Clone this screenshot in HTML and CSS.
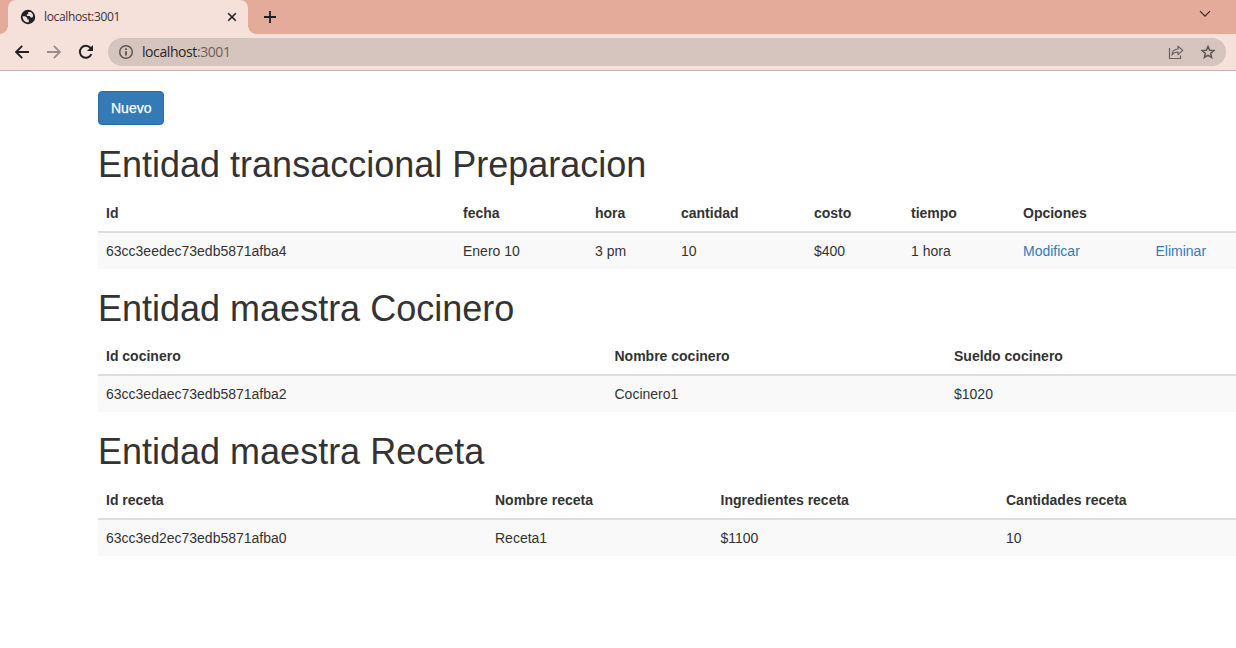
FILE: index.html
```html
<!DOCTYPE html>
<html lang="es">
<head>
<meta charset="utf-8">
<title>localhost:3001</title>
<link rel="stylesheet" href="styles.css">
</head>
<body>
<header class="browser">
  <div class="tabstrip">
    <div class="tab">
      <svg class="globe" width="16" height="16" viewBox="0 0 16 16"><circle cx="8" cy="8" r="7.2" fill="#202124"/><path d="M2.6 7.2h2.6l2.1 1.7v1.5h1.5v2.9c-3.4.3-6.2-2-6.2-6.1zM8.2 3.1h2.5c1.2.8 2.2 2 2.4 3.6l-.6 1.7h-1.8l-.9-1.3H6.9V5.2h1.3z" fill="#f5e0da"/></svg>
      <span class="tab-title">localhost:3001</span>
      <svg class="close" width="10" height="10" viewBox="0 0 10 10"><path d="M1.2 1.2l7.6 7.6M8.8 1.2l-7.6 7.6" stroke="#202124" stroke-width="1.6"/></svg>
    </div>
    <svg class="plus" width="12" height="12" viewBox="0 0 12 12"><path d="M6 0v12M0 6h12" stroke="#202124" stroke-width="1.8"/></svg>
    <svg class="chevron" width="12" height="8" viewBox="0 0 12 8"><path d="M1 1.2l5 5 5-5" fill="none" stroke="#3a2724" stroke-width="1.2"/></svg>
  </div>
  <div class="toolbar">
    <svg width="16" height="16" viewBox="0 0 16 16"><path d="M15 8H2.200M8.200 1.900L2.100 8l6.100 6.100" fill="none" stroke="#202124" stroke-width="1.9"/></svg>
    <svg width="16" height="16" viewBox="0 0 16 16"><path d="M1 8h12.800M7.800 1.900L13.900 8l-6.100 6.100" fill="none" stroke="#9a8e8b" stroke-width="1.8"/></svg>
    <svg width="16" height="16" viewBox="0 0 16 16"><path d="M13.4 10.2A6 6 0 1 1 12.5 4l1 1.2" fill="none" stroke="#202124" stroke-width="2"/><path d="M15 1v6H9z" fill="#202124"/></svg>
    <div class="address">
      <svg width="16" height="16" viewBox="0 0 16 16"><circle cx="8" cy="8" r="6.3" fill="none" stroke="#5f5654" stroke-width="1.5"/><path d="M8 7.2v4.2M8 4.3v1.6" stroke="#5f5654" stroke-width="1.8"/></svg>
      <span class="url">localhost<span class="port">:3001</span></span>
      <svg class="share" width="16" height="16" viewBox="0 0 16 16"><path d="M1.500 4v10.500h11v-3" fill="none" stroke="#66605e" stroke-width="1.200"/><path d="M4 11c.2-3.800 2.300-5.900 6-6V2.200l4.800 4.200L10 10.600V8C7.200 8 5.200 9 4 11z" fill="none" stroke="#66605e" stroke-width="1.200" stroke-linejoin="round"/></svg>
      <svg class="star" width="16" height="16" viewBox="0 0 16 16"><path d="M8 2.400l1.600 3.900 4.200.3-3.200 2.800 1 4.100L8 11.300l-3.600 2.200 1-4.100-3.200-2.800 4.200-.3z" fill="none" stroke="#5f5856" stroke-width="1.500"/></svg>
    </div>
  </div>
</header>
<main class="container">
  <button class="btn">Nuevo</button>
  <h1>Entidad transaccional Preparacion</h1>
  <table class="table preparacion">
    <colgroup><col class="p-id"><col class="p-fecha"><col class="p-hora"><col class="p-cantidad"><col class="p-costo"><col class="p-tiempo"><col class="p-mod"><col></colgroup>
    <thead><tr><th>Id</th><th>fecha</th><th>hora</th><th>cantidad</th><th>costo</th><th>tiempo</th><th>Opciones</th><th></th></tr></thead>
    <tbody><tr><td>63cc3eedec73edb5871afba4</td><td>Enero 10</td><td>3 pm</td><td>10</td><td>$400</td><td>1 hora</td><td><a href="#">Modificar</a></td><td><a href="#">Eliminar</a></td></tr></tbody>
  </table>
  <h1>Entidad maestra Cocinero</h1>
  <table class="table">
    <colgroup><col class="c-id"><col class="c-nombre"><col></colgroup>
    <thead><tr><th>Id cocinero</th><th>Nombre cocinero</th><th>Sueldo cocinero</th></tr></thead>
    <tbody><tr><td>63cc3edaec73edb5871afba2</td><td>Cocinero1</td><td>$1020</td></tr></tbody>
  </table>
  <h1>Entidad maestra Receta</h1>
  <table class="table">
    <colgroup><col class="r-id"><col class="r-nombre"><col class="r-ingr"><col></colgroup>
    <thead><tr><th>Id receta</th><th>Nombre receta</th><th>Ingredientes receta</th><th>Cantidades receta</th></tr></thead>
    <tbody><tr><td>63cc3ed2ec73edb5871afba0</td><td>Receta1</td><td>$1100</td><td>10</td></tr></tbody>
  </table>
</main>
</body>
</html>
```
FILE: styles.css
```css
* { box-sizing: border-box; }
body {
  margin: 0;
  height: 648px;
  overflow: hidden;
  background: #fff;
  color: #333;
  font: 14px/20px "Liberation Sans", Arial, sans-serif;
}
svg { display: block; flex: none; }
.browser {
  height: 71px;
  background: #f5e0da;
  border-bottom: 1px solid #c4b3ae;
  font-family: "Open Sans", "Noto Sans", sans-serif;
}
.tabstrip {
  display: flex;
  align-items: center;
  height: 34px;
  padding: 0 25px 0 8px;
  background: #e4ab9a;
}
.tab {
  position: relative;
  display: flex;
  align-items: center;
  width: 240px;
  height: 34px;
  padding: 0 11px 0 12px;
  background: #f5e0da;
  border-radius: 8px 8px 0 0;
}
.tab::before, .tab::after {
  content: "";
  position: absolute;
  bottom: 0;
  width: 8px;
  height: 8px;
}
.tab::before { left: -8px; background: radial-gradient(circle at 0 0, #e4ab9a 7.5px, #f5e0da 8px); }
.tab::after { right: -8px; background: radial-gradient(circle at 100% 0, #e4ab9a 7.5px, #f5e0da 8px); }
.tab-title { margin-left: 8px; font-size: 12px; letter-spacing: -0.35px; color: #3b3432; }
.close { margin-left: auto; }
.plus { margin-left: 16px; }
.chevron { margin: 0 0 6px auto; }
.toolbar {
  display: flex;
  align-items: center;
  gap: 16px;
  height: 36px;
  padding: 0 10px 0 14px;
}
.address {
  display: flex;
  align-items: center;
  flex: 1;
  height: 28px;
  margin-left: -2px;
  padding: 0 10px;
  border-radius: 14px;
  background: #d6c5bf;
}
.url { margin-left: 8px; font-size: 14px; letter-spacing: -0.42px; color: #2a2523; }
.port { color: #6b605d; }
.share { margin-left: auto; }
.star { margin-left: 16px; }
.container { width: 1140px; margin-left: 98px; padding-top: 20px; }
.btn {
  display: block;
  height: 34px;
  padding: 6px 12px;
  border: 1px solid #2e6da4;
  border-radius: 4px;
  background: #337ab7;
  color: #fff;
  font: inherit;
  -webkit-text-stroke: 0.25px #fff;
}
h1 { margin: 20px 0 10px; font-size: 36px; font-weight: 400; line-height: 1.1; }
.table {
  width: 100%;
  margin-bottom: 20px;
  table-layout: fixed;
  border-collapse: collapse;
}
th, td { padding: 8px; text-align: left; white-space: nowrap; }
th { border-bottom: 2px solid #ddd; }
td { background: #f9f9f9; }
a { color: #337ab7; text-decoration: none; }
.p-id { width: 357px; }
.p-fecha { width: 132px; }
.p-hora { width: 86px; }
.p-cantidad { width: 133px; }
.p-costo { width: 97px; }
.p-tiempo { width: 112px; }
.p-mod { width: 132.5px; }
.c-id { width: 508.5px; }
.c-nombre { width: 339.5px; }
.r-id { width: 389px; }
.r-nombre { width: 225.5px; }
.r-ingr { width: 285.5px; }
```
